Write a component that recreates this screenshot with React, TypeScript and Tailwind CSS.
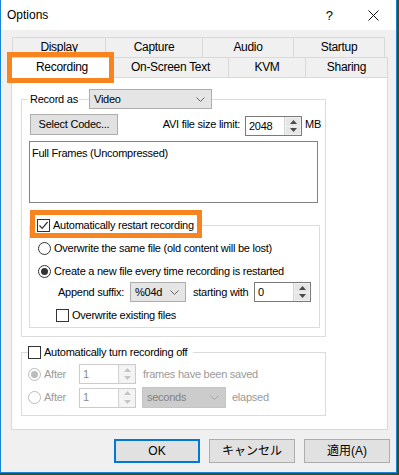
import type { ReactNode } from "react";

function CheckBox({ checked }: { checked?: boolean }) {
	return (
		<span className="flex h-[13px] w-[13px] shrink-0 items-center justify-center border border-[#333333] bg-white">
			{checked ? (
				<svg width="11" height="11" viewBox="0 0 11 11">
					<path d="M1.5 5.5 L4.2 8.3 L9.6 2" stroke="#333" strokeWidth="1.2" fill="none" />
				</svg>
			) : null}
		</span>
	);
}

function Radio({ checked, disabled }: { checked?: boolean; disabled?: boolean }) {
	return (
		<span
			className={`flex h-[13px] w-[13px] shrink-0 items-center justify-center rounded-full border bg-white ${
				disabled ? "border-[#bcbcbc]" : "border-[#333333]"
			}`}
		>
			{checked ? (
				<span
					className={`h-[7px] w-[7px] rounded-full ${disabled ? "bg-[#bcbcbc]" : "bg-[#333333]"}`}
				/>
			) : null}
		</span>
	);
}

function Spin({ disabled }: { disabled?: boolean }) {
	const cor = disabled ? "#c4c4c4" : "#4a4a4a";
	return (
		<div className="flex w-[17px] flex-col gap-px border-l border-[#d4d4d4] bg-[#f0f0f0] p-px">
			<div className={`flex flex-1 items-center justify-center ${disabled ? "bg-[#f4f4f4]" : "bg-[#e6e6e6]"}`}>
				<svg width="7" height="4" viewBox="0 0 7 4">
					<path d="M0 4 L3.5 0 L7 4Z" fill={cor} />
				</svg>
			</div>
			<div className={`flex flex-1 items-center justify-center ${disabled ? "bg-[#f4f4f4]" : "bg-[#e6e6e6]"}`}>
				<svg width="7" height="4" viewBox="0 0 7 4">
					<path d="M0 0 L3.5 4 L7 0Z" fill={cor} />
				</svg>
			</div>
		</div>
	);
}

function NumBox({ value, className, disabled }: { value: string; className: string; disabled?: boolean }) {
	return (
		<div
			className={`flex h-[20px] shrink-0 border bg-white ${
				disabled ? "border-[#cccccc] text-[#8a8a8a]" : "border-[#7a7a7a]"
			} ${className}`}
		>
			<span className="flex flex-1 items-center pl-[3px]">{value}</span>
			<Spin disabled={disabled} />
		</div>
	);
}

function Drop({ value, className, disabled }: { value: string; className: string; disabled?: boolean }) {
	return (
		<div
			className={`flex shrink-0 items-center justify-between border pl-[4px] pr-[6px] ${
				disabled ? "border-[#c4c4c4] bg-[#cccccc] text-[#838383]" : "border-[#adadad] bg-[#e5e5e5]"
			} ${className}`}
		>
			<span>{value}</span>
			<svg width="9" height="5" viewBox="0 0 9 5">
				<path d="M0.5 0.5 L4.5 4.5 L8.5 0.5" stroke={disabled ? "#a8a8a8" : "#666"} fill="none" />
			</svg>
		</div>
	);
}

function Aba({ children, className }: { children: ReactNode; className: string }) {
	return (
		<div className={`flex items-center justify-center border-l border-t border-[#d9d9d9] ${className}`}>
			{children}
		</div>
	);
}

function Botao({ children, padrao }: { children: ReactNode; padrao?: boolean }) {
	return (
		<button
			type="button"
			className={`flex h-[24px] w-[86px] items-center justify-center bg-[#e1e1e1] font-['Liberation_Sans','Noto_Sans_CJK_JP',sans-serif] text-[12px] tracking-normal ${
				padrao ? "border-2 border-[#0078d7]" : "border border-[#adadad]"
			}`}
		>
			{children}
		</button>
	);
}

export default function App() {
	return (
		<div className="h-[475px] w-[399px] bg-[#3a5024] font-['Liberation_Sans',Arial,sans-serif] text-[11px] leading-[15px] tracking-[-0.25px] text-black">
			<div className="flex h-[473px] w-[397px] flex-col border-x border-b border-[#1883d7] bg-[#f0f0f0]">
				{/* barra de título */}
				<div className="flex h-[30px] shrink-0 items-center bg-white pl-[6px]">
					<span className="text-[12px] tracking-normal">Options</span>
					<span className="ml-auto text-[13px] tracking-normal">?</span>
					<svg className="ml-[35px] mr-[17px]" width="11" height="11" viewBox="0 0 11 11">
						<path d="M0.5 0.5 L10.5 10.5 M10.5 0.5 L0.5 10.5" stroke="#111" strokeWidth="1" />
					</svg>
				</div>

				{/* abas */}
				<div className="relative ml-[10px] mt-[7px] w-[377px] text-[12px] tracking-[-0.3px]">
					<div className="ml-px flex h-[20px]">
						<Aba className="w-[93px]">Display</Aba>
						<Aba className="w-[97px]">Capture</Aba>
						<Aba className="w-[91px]">Audio</Aba>
						<Aba className="w-[92px] border-r">Startup</Aba>
					</div>
					<div className="flex h-[20px]">
						<Aba className="relative z-10 h-[21px] w-[101px] bg-white pb-[2px]">Recording</Aba>
						<Aba className="w-[116px]">On-Screen Text</Aba>
						<Aba className="w-[77px]">KVM</Aba>
						<Aba className="w-[83px] border-r">Sharing</Aba>
					</div>
					<div className="absolute left-[-4px] top-[15px] z-20 h-[31px] w-[107px] border-[5px] border-[#f7841f]" />
				</div>

				{/* painel */}
				<div className="ml-[10px] h-[353px] w-[377px] shrink-0 border border-[#d9d9d9] bg-white">
					<fieldset className="ml-[9px] mt-[11px] w-[305px] border border-[#dcdcdc] pb-[8px]">
						<legend className="ml-[6px] flex h-[20px] items-center p-0">
							<span className="w-[51px] pl-[2px]">Record as</span>
							<span className="h-px w-[10px] bg-[#dcdcdc]" />
							<Drop value="Video" className="h-[20px] w-[123px]" />
						</legend>

						<div className="ml-[8px] mt-[5px] flex h-[22px] w-[294px] items-start">
							<button
								type="button"
								className="h-[21px] w-[88px] border border-[#adadad] bg-[#e1e1e1] tracking-[-0.25px]"
							>
								Select Codec...
							</button>
							<span className="mt-[3px] flex-1 pr-[5px] text-right">AVI file size limit:</span>
							<NumBox value="2048" className="mt-[2px] w-[57px]" />
							<span className="mt-[3px] w-[22px] pl-[3px]">MB</span>
						</div>

						<div className="ml-[7px] mt-[5px] h-[62px] w-[289px] border border-[#828282] pl-[2px] pt-[4px]">
							Full Frames (Uncompressed)
						</div>

						<fieldset className="ml-[7px] mt-[15px] w-[291px] border border-[#dcdcdc] pb-[5px]">
							<legend className="relative ml-[7px] flex h-[14px] items-center gap-[3px] p-0 pr-[2px]">
								<CheckBox checked />
								<span>Automatically restart recording</span>
								<span className="absolute left-[-7px] top-[-8px] h-[28px] w-[172px] border-[5px] border-[#f7841f]" />
							</legend>
							<div className="ml-[8px] mt-[8px] flex h-[16px] items-center gap-[3px]">
								<Radio />
								<span>Overwrite the same file (old content will be lost)</span>
							</div>
							<div className="ml-[8px] mt-[7px] flex h-[16px] items-center gap-[3px]">
								<Radio checked />
								<span>Create a new file every time recording is restarted</span>
							</div>
							<div className="ml-[28px] mt-[3px] flex h-[20px] items-center">
								<span className="w-[72px]">Append suffix:</span>
								<Drop value="%04d" className="h-[20px] w-[56px]" />
								<span className="ml-[7px] w-[61px]">starting with</span>
								<NumBox value="0" className="w-[57px]" />
							</div>
							<div className="ml-[26px] mt-[6px] flex h-[14px] items-center gap-[3px]">
								<CheckBox />
								<span>Overwrite existing files</span>
							</div>
						</fieldset>
					</fieldset>

					<fieldset className="ml-[9px] mt-[8px] w-[305px] border border-[#dcdcdc] pb-[7px]">
						<legend className="ml-[6px] flex h-[14px] items-center gap-[3px] p-0 pr-[6px]">
							<CheckBox />
							<span>Automatically turn recording off</span>
						</legend>
						<div className="ml-[6px] mt-[5px] flex h-[20px] items-center text-[#9a9a9a]">
							<Radio checked disabled />
							<span className="w-[38px] pl-[3px]">After</span>
							<NumBox value="1" className="w-[57px]" disabled />
							<span className="ml-[7px]">frames have been saved</span>
						</div>
						<div className="ml-[6px] mt-[3px] flex h-[21px] items-center text-[#9a9a9a]">
							<Radio disabled />
							<span className="w-[38px] pl-[3px]">After</span>
							<NumBox value="1" className="w-[57px]" disabled />
							<Drop value="seconds" className="ml-[6px] h-[21px] w-[84px]" disabled />
							<span className="ml-[6px]">elapsed</span>
						</div>
					</fieldset>
				</div>

				{/* botões */}
				<div className="ml-[113px] mt-[9px] flex gap-[9px]">
					<Botao padrao>OK</Botao>
					<Botao>キャンセル</Botao>
					<Botao>適用(A)</Botao>
				</div>
			</div>
		</div>
	);
}
